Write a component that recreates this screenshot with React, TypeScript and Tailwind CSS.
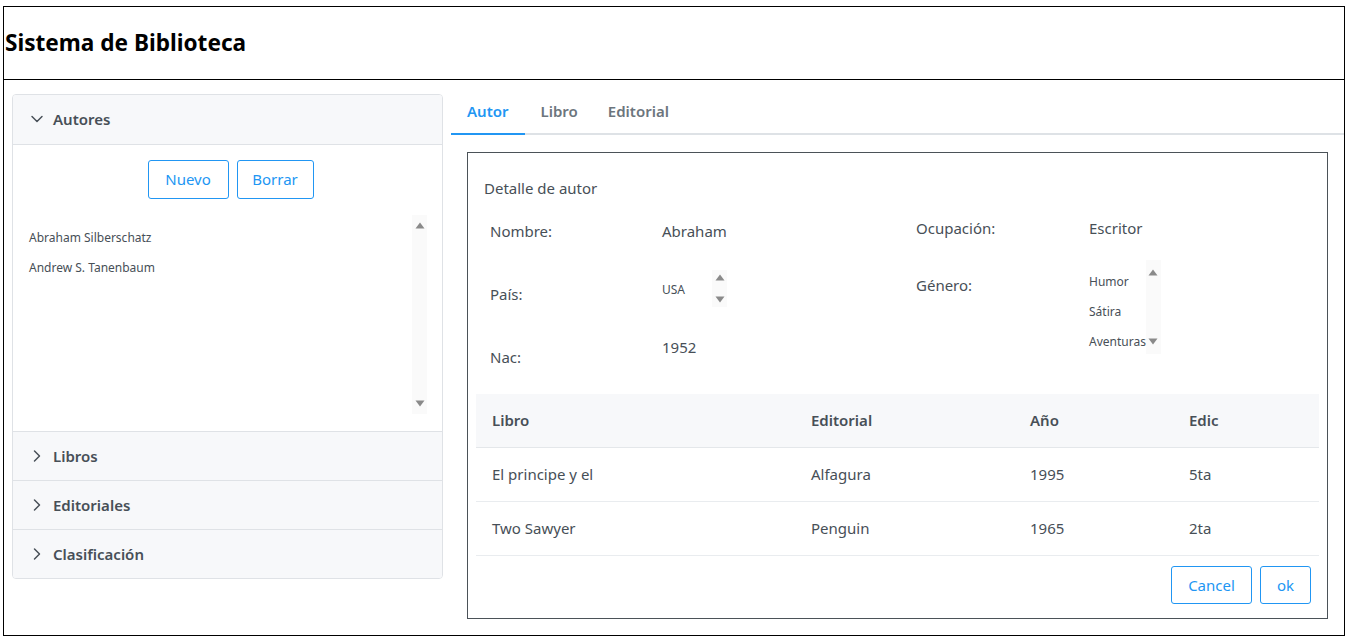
import { ChevronDown, ChevronRight } from 'lucide-react';

const font = { fontFamily: '"Noto Sans", "Open Sans", sans-serif' };

function Triangle({ dir }: { dir: 'up' | 'down' }) {
  return (
    <svg width="10" height="7" viewBox="0 0 10 7">
      {dir === 'up' ? <path d="M5 0.5 L9.5 6.5 L0.5 6.5 Z" fill="#8a8a8a" /> : <path d="M0.5 0.5 L9.5 0.5 L5 6.5 Z" fill="#8a8a8a" />}
    </svg>
  );
}

function ScrollBar({ className }: { className: string }) {
  return (
    <div className={`flex flex-col justify-between items-center bg-[#fafafa] w-[15px] ${className}`}>
      <Triangle dir="up" />
      <Triangle dir="down" />
    </div>
  );
}

function AccHeader({ label, open }: { label: string; open?: boolean }) {
  return (
    <div className="h-[49px] flex items-center bg-[#f7f8fa] border-t border-[#dfe2e6] first:border-t-0 pl-[14px] gap-[6px] text-[#474f57] text-[15px] font-semibold">
      {open ? <ChevronDown className="w-[20px] h-[20px]" strokeWidth={1.75} /> : <ChevronRight className="w-[20px] h-[20px]" strokeWidth={1.75} />}
      <span>{label}</span>
    </div>
  );
}

function OutlineBtn({ children, className }: { children: string; className: string }) {
  return (
    <button className={`border border-[#2196f3] rounded-[3px] text-[#2196f3] text-[15px] bg-white ${className}`}>{children}</button>
  );
}

const books = [
  { libro: 'El principe y el', editorial: 'Alfagura', anio: '1995', edic: '5ta' },
  { libro: 'Two Sawyer', editorial: 'Penguin', anio: '1965', edic: '2ta' },
];

export default function App() {
  return (
    <div className="bg-white w-[1348px] h-[637px] pt-[6px] pl-[3px]" style={font}>
      <div className="w-[1342px] h-[630px] border border-black flex flex-col">
        {/* Header */}
        <div className="h-[73px] border-b border-black flex items-center pl-[1px]">
          <h1 className="text-[22.6px] font-bold text-black">Sistema de Biblioteca</h1>
        </div>

        <div className="flex pt-[14px] pl-[8px]">
          {/* Left accordion */}
          <div className="w-[431px] h-[485px] border border-[#dfe2e6] rounded-[4px] flex flex-col overflow-hidden">
            <AccHeader label="Autores" open />
            <div className="h-[288px] border-t border-[#dfe2e6] bg-white flex flex-col">
              <div className="flex justify-center gap-[8px] pt-[15px] pl-[6px]">
                <OutlineBtn className="w-[81px] h-[39px]">Nuevo</OutlineBtn>
                <OutlineBtn className="w-[77px] h-[39px]">Borrar</OutlineBtn>
              </div>
              <div className="flex pt-[16px]">
                <div className="flex-1 pl-[16px] pt-[14px] flex flex-col gap-[12px] text-[12px] text-[#474f57]">
                  <span>Abraham Silberschatz</span>
                  <span>Andrew S. Tanenbaum</span>
                </div>
                <ScrollBar className="h-[199px] mr-[15px] py-[7px]" />
              </div>
            </div>
            <AccHeader label="Libros" />
            <AccHeader label="Editoriales" />
            <AccHeader label="Clasificación" />
          </div>

          {/* Right side */}
          <div className="flex-1 ml-[8px] flex flex-col">
            <div className="flex border-b-2 border-[#dee2e6] h-[41px] text-[15px] font-semibold">
              <div className="px-[16px] pb-[4px] flex items-center border-b-2 border-[#2196f3] -mb-[2px] text-[#2196f3]">Autor</div>
              <div className="px-[16px] pb-[4px] flex items-center text-[#6c757d]">Libro</div>
              <div className="px-[14px] pb-[4px] flex items-center text-[#6c757d]">Editorial</div>
            </div>

            <div className="ml-[16px] mr-[16px] mt-[17px] h-[467px] border border-[#4b5258] px-[8px] flex flex-col text-[#474f57]">
              <div className="pl-[8px] pt-[24px] text-[15px]">Detalle de autor</div>

              <div className="flex pl-[14px] mt-[10px] text-[15px]">
                <div className="w-[172px] flex flex-col">
                  <div className="h-[63px] pt-[10px]">Nombre:</div>
                  <div className="h-[63px] pt-[10px]">País:</div>
                  <div className="h-[52px] pt-[10px]">Nac:</div>
                </div>
                <div className="w-[254px] flex flex-col">
                  <div className="h-[63px] pt-[10px]">Abraham</div>
                  <div className="h-[63px] flex items-start">
                    <span className="text-[12px] mt-[8px]">USA</span>
                    <div className="ml-[27px] -mt-[3px] w-[15px] h-[37px] bg-[#fafafa] flex flex-col items-center justify-between py-[4px]">
                      <Triangle dir="up" />
                      <Triangle dir="down" />
                    </div>
                  </div>
                  <div className="h-[52px]">1952</div>
                </div>
                <div className="w-[173px] flex flex-col">
                  <div className="h-[57px] pt-[7px]">Ocupación:</div>
                  <div className="pt-[7px]">Género:</div>
                </div>
                <div className="flex flex-col">
                  <div className="h-[57px] pt-[7px]">Escritor</div>
                  <div className="flex -mt-[7px]">
                    <div className="flex flex-col gap-[12px] text-[12px] pt-[13px]">
                      <span>Humor</span>
                      <span>Sátira</span>
                      <span>Aventuras</span>
                    </div>
                    <ScrollBar className="h-[94px] py-[9px]" />
                  </div>
                </div>
              </div>

              <table className="w-full mt-[6px] text-[15px] border-collapse">
                <thead>
                  <tr className="bg-[#f7f8fa] h-[54px] border-b border-[#e4e7ea] text-[#474f57]">
                    <th className="text-left font-semibold pl-[16px] w-[335px]">Libro</th>
                    <th className="text-left font-semibold w-[219px]">Editorial</th>
                    <th className="text-left font-semibold w-[159px]">Año</th>
                    <th className="text-left font-semibold">Edic</th>
                  </tr>
                </thead>
                <tbody>
                  {books.map((b) => (
                    <tr key={b.libro} className="h-[54px] border-b border-[#e9ecef]">
                      <td className="pl-[16px]">{b.libro}</td>
                      <td>{b.editorial}</td>
                      <td>{b.anio}</td>
                      <td>{b.edic}</td>
                    </tr>
                  ))}
                </tbody>
              </table>

              <div className="flex justify-end gap-[8px] pt-[10px] pr-[8px]">
                <OutlineBtn className="w-[81px] h-[38px]">Cancel</OutlineBtn>
                <OutlineBtn className="w-[51px] h-[38px]">ok</OutlineBtn>
              </div>
            </div>
          </div>
        </div>
      </div>
    </div>
  );
}
